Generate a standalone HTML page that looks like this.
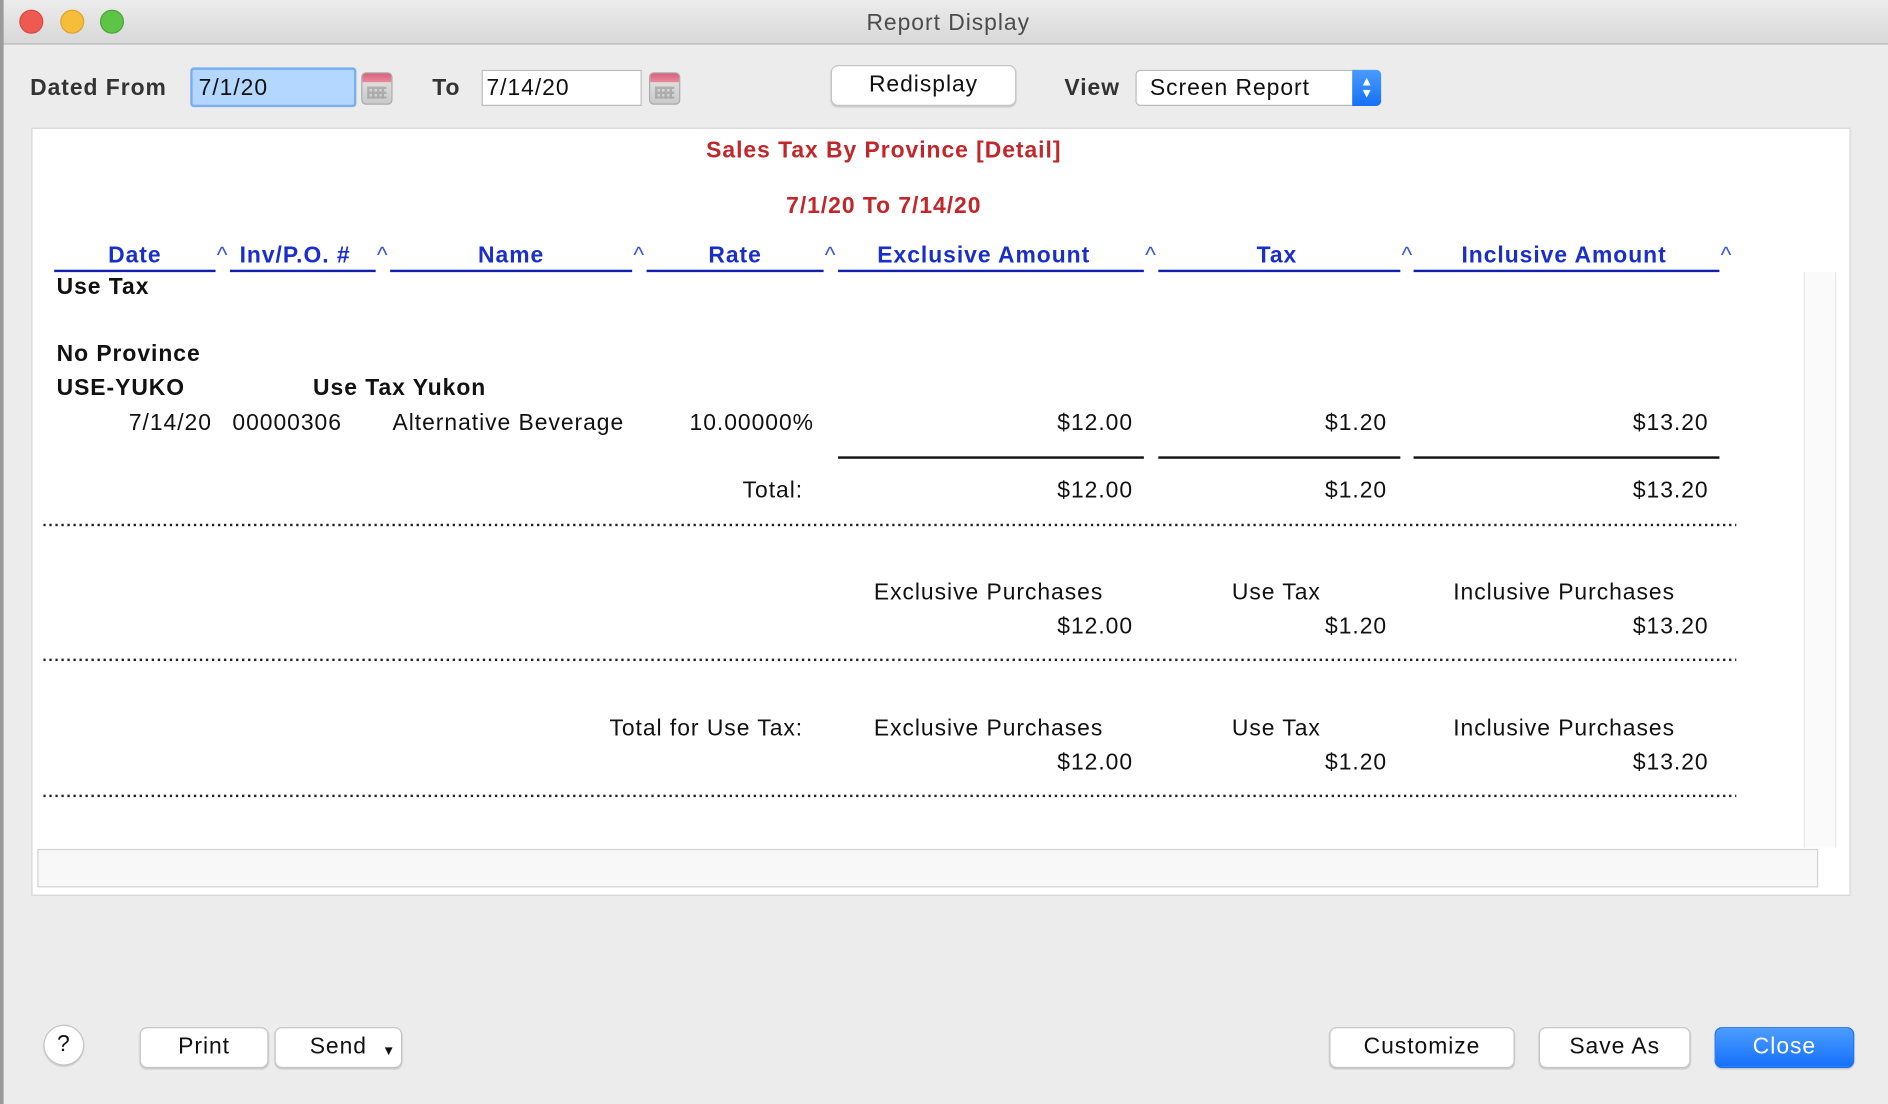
<!DOCTYPE html>
<html><head><meta charset="utf-8"><style>
html,body{margin:0;padding:0;width:1888px;height:1104px;overflow:hidden;background:#ececec}
#w{position:absolute;left:0;top:0;width:1568px;height:917px;transform:scale(1.20408);transform-origin:0 0;font-family:"Liberation Sans",sans-serif;font-size:19px;color:#111;letter-spacing:0.8px}
.a{position:absolute;white-space:nowrap;line-height:24px;margin-top:2px}
.r{text-align:right}
.c{text-align:center}
.b{font-weight:bold}
.h{color:#1a2ecc;font-weight:bold}
.ul{position:absolute;height:2px;background:#1020b0}
.car{position:absolute;color:#3a55dd;font-size:19px;line-height:20px;letter-spacing:0}
.dot{position:absolute;left:36px;width:1406px;height:2px;background-image:linear-gradient(90deg,#222 0 2px,transparent 2px);background-size:5px 2px}
.sol{position:absolute;height:2px;background:#111}
.btn{position:absolute;background:#fff;border:1px solid #c4c4c4;border-radius:6px;box-shadow:0 1px 1px rgba(0,0,0,.15);text-align:center;line-height:31px;font-size:19px}
.cal{position:absolute;width:24px;height:25px;border-radius:4px;background:linear-gradient(#d9617a 0,#e8889a 28%,#ddd 30%,#c9c9c9 100%);border:1px solid #aaa}
.cal:after{content:"";position:absolute;left:4px;top:11px;width:16px;height:10px;background:repeating-linear-gradient(90deg,#888 0 2px,transparent 2px 4px),repeating-linear-gradient(0deg,#888 0 2px,transparent 2px 4px);opacity:.5}
</style></head><body><div id="w">
<div style="position:absolute;left:0;top:0;width:1568px;height:36px;background:linear-gradient(#ececec,#d8d8d8);border-bottom:1px solid #b5b5b5"></div>
<div style="position:absolute;left:0;top:0;width:3px;height:917px;background:#9a9a9a"></div>
<div style="position:absolute;left:16px;top:8px;width:20px;height:20px;border-radius:50%;background:#ee5a52;border:1px solid #d44a40;box-sizing:border-box"></div>
<div style="position:absolute;left:50px;top:8px;width:20px;height:20px;border-radius:50%;background:#f6bd3b;border:1px solid #dca32c;box-sizing:border-box"></div>
<div style="position:absolute;left:83px;top:8px;width:20px;height:20px;border-radius:50%;background:#5ec448;border:1px solid #48a537;box-sizing:border-box"></div>
<div class="a c" style="left:0;width:1575px;top:6px;color:#4c4c4c">Report Display</div>

<div class="a" style="left:25px;top:60px;color:#333;font-weight:bold;">Dated From</div>
<div style="position:absolute;left:158px;top:56px;width:138px;height:33px;background:#b3d7ff;border:2px solid #7aaef0;border-radius:3px;box-sizing:border-box"></div>
<div class="a" style="left:165px;top:60px">7/1/20</div>
<div class="cal" style="left:300px;top:60px"></div>
<div class="a b" style="left:359px;top:60px;color:#333">To</div>
<div style="position:absolute;left:400px;top:58px;width:133px;height:30px;background:#fff;border:1px solid #bbb;box-sizing:border-box"></div>
<div class="a" style="left:404px;top:60px">7/14/20</div>
<div class="cal" style="left:539px;top:60px"></div>
<div class="btn" style="left:690px;top:54px;width:152px;height:32px">Redisplay</div>
<div class="a b" style="left:884px;top:60px;color:#333">View</div>
<div style="position:absolute;left:943px;top:58px;width:204px;height:30px;background:#fff;border:1px solid #bbb;border-radius:4px;box-sizing:border-box"></div>
<div class="a" style="left:955px;top:60px">Screen Report</div>
<div style="position:absolute;left:1123px;top:58px;width:24px;height:30px;background:linear-gradient(#4a9bff,#1670f5);border-radius:0 4px 4px 0;color:#fff;font-size:11px;line-height:10px;text-align:center;padding-top:5px;box-sizing:border-box;letter-spacing:0">▲<br>▼</div>

<div style="position:absolute;left:26px;top:106px;width:1511px;height:638px;background:#fff;border:1px solid #d4d4d4;box-sizing:border-box"></div>
<div style="position:absolute;left:1498px;top:226px;width:25px;height:478px;background:#fafafa;border-left:1px solid #e6e6e6;border-right:1px solid #e6e6e6"></div>
<div style="position:absolute;left:31px;top:705px;width:1479px;height:32px;background:#f8f8f8;border:1px solid #d2d2d2;box-sizing:border-box"></div>

<div class="a c b" style="left:0;width:1468px;top:112px;color:#c0262a">Sales Tax By Province [Detail]</div>
<div class="a c b" style="left:0;width:1468px;top:158px;color:#c0262a">7/1/20 To 7/14/20</div>

<div class="a c h" style="left:45px;width:134px;top:199px">Date</div><div class="ul" style="left:45px;width:134px;top:224px"></div><div class="car" style="left:180px;top:203px">^</div>
<div class="a h" style="left:199px;top:199px">Inv/P.O. #</div><div class="ul" style="left:191px;width:121px;top:224px"></div><div class="car" style="left:313px;top:203px">^</div>
<div class="a c h" style="left:324px;width:201px;top:199px">Name</div><div class="ul" style="left:324px;width:201px;top:224px"></div><div class="car" style="left:526px;top:203px">^</div>
<div class="a c h" style="left:537px;width:147px;top:199px">Rate</div><div class="ul" style="left:537px;width:147px;top:224px"></div><div class="car" style="left:685px;top:203px">^</div>
<div class="a c h" style="left:690px;width:254px;top:199px">Exclusive Amount</div><div class="ul" style="left:696px;width:254px;top:224px"></div><div class="car" style="left:951px;top:203px">^</div>
<div class="a c h" style="left:960px;width:201px;top:199px">Tax</div><div class="ul" style="left:962px;width:201px;top:224px"></div><div class="car" style="left:1164px;top:203px">^</div>
<div class="a c h" style="left:1172px;width:254px;top:199px">Inclusive Amount</div><div class="ul" style="left:1174px;width:254px;top:224px"></div><div class="car" style="left:1429px;top:203px">^</div>

<div class="a b" style="left:47px;top:225px">Use Tax</div>
<div class="a b" style="left:47px;top:281px">No Province</div>
<div class="a b" style="left:47px;top:309px">USE-YUKO</div>
<div class="a b" style="left:260px;top:309px">Use Tax Yukon</div>

<div class="a r" style="left:60px;width:116px;top:338px">7/14/20</div>
<div class="a" style="left:193px;top:338px">00000306</div>
<div class="a" style="left:326px;top:338px">Alternative Beverage</div>
<div class="a r" style="left:540px;width:136px;top:338px">10.00000%</div>
<div class="a r" style="left:700px;width:241px;top:338px">$12.00</div>
<div class="a r" style="left:962px;width:190px;top:338px">$1.20</div>
<div class="a r" style="left:1174px;width:245px;top:338px">$13.20</div>

<div class="sol" style="left:696px;width:254px;top:379px"></div>
<div class="sol" style="left:962px;width:201px;top:379px"></div>
<div class="sol" style="left:1174px;width:254px;top:379px"></div>

<div class="a r" style="left:500px;width:167px;top:394px">Total:</div>
<div class="a r" style="left:700px;width:241px;top:394px">$12.00</div>
<div class="a r" style="left:962px;width:190px;top:394px">$1.20</div>
<div class="a r" style="left:1174px;width:245px;top:394px">$13.20</div>
<div class="dot" style="top:435px"></div>

<div class="a c" style="left:696px;width:250px;top:479px">Exclusive Purchases</div>
<div class="a c" style="left:962px;width:196px;top:479px">Use Tax</div>
<div class="a c" style="left:1174px;width:250px;top:479px">Inclusive Purchases</div>
<div class="a r" style="left:700px;width:241px;top:507px">$12.00</div>
<div class="a r" style="left:962px;width:190px;top:507px">$1.20</div>
<div class="a r" style="left:1174px;width:245px;top:507px">$13.20</div>
<div class="dot" style="top:547px"></div>

<div class="a r" style="left:400px;width:267px;top:592px">Total for Use Tax:</div>
<div class="a c" style="left:696px;width:250px;top:592px">Exclusive Purchases</div>
<div class="a c" style="left:962px;width:196px;top:592px">Use Tax</div>
<div class="a c" style="left:1174px;width:250px;top:592px">Inclusive Purchases</div>
<div class="a r" style="left:700px;width:241px;top:620px">$12.00</div>
<div class="a r" style="left:962px;width:190px;top:620px">$1.20</div>
<div class="a r" style="left:1174px;width:245px;top:620px">$13.20</div>
<div class="dot" style="top:660px"></div>

<div class="btn" style="left:36px;top:851px;width:32px;height:32px;border-radius:50%;line-height:31px">?</div>
<div class="btn" style="left:116px;top:853px;width:105px;height:32px">Print</div>
<div class="btn" style="left:228px;top:853px;width:104px;height:32px">Send<span style="position:absolute;right:4px;top:4px;font-size:11px">▼</span></div>
<div class="btn" style="left:1104px;top:853px;width:152px;height:32px">Customize</div>
<div class="btn" style="left:1278px;top:853px;width:124px;height:32px">Save As</div>
<div class="btn" style="left:1424px;top:853px;width:114px;height:32px;background:linear-gradient(#4c9dff,#1570fb);border-color:#1a6ef0;color:#fff">Close</div>
</div></body></html>
